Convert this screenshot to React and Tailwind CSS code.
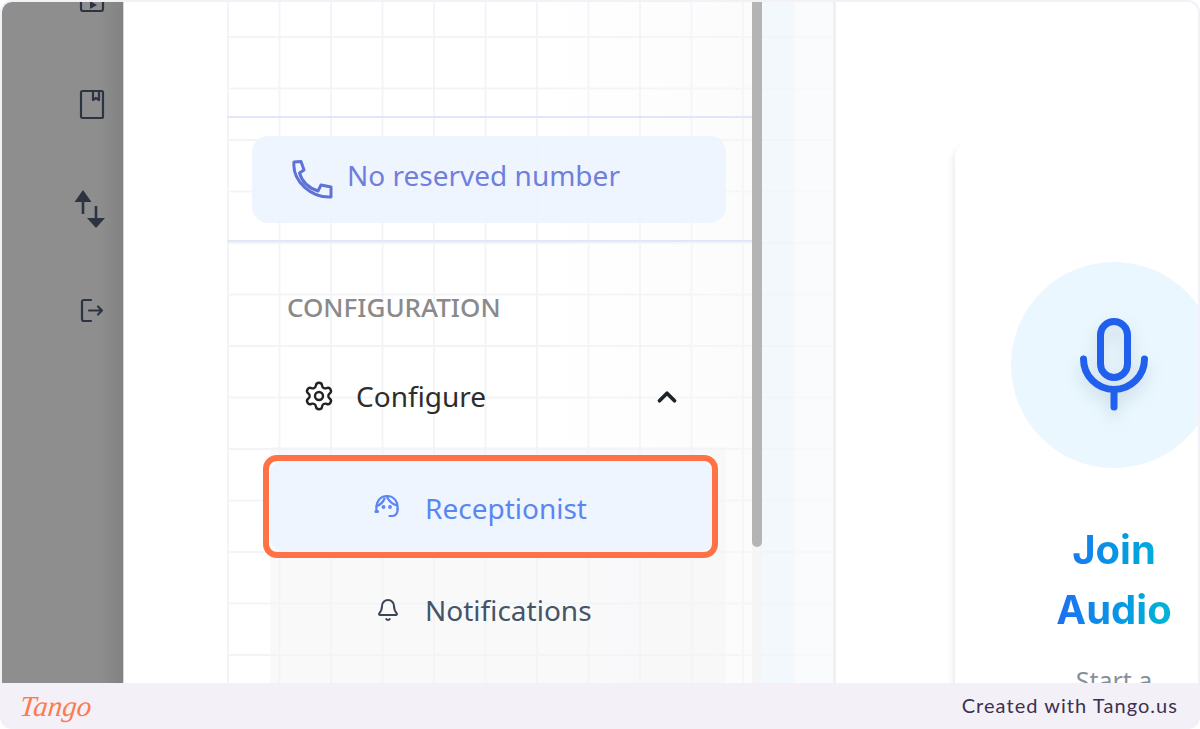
import React from 'react';
import { Settings, ChevronUp, Bell } from 'lucide-react';

const RailIcon = ({ className, children, w, h, vb }) => (
  <svg width={w} height={h} viewBox={vb} fill="none" stroke="#2b3440" strokeWidth="2.2" strokeLinecap="round" strokeLinejoin="round" className={className}>
    {children}
  </svg>
);

const Rail = () => (
  <div className="flex h-full w-[121px] shrink-0 flex-col bg-linear-to-r from-[#8e8e8e] from-80% to-[#828282]">
    <RailIcon w={26} h={30} vb="0 0 26 30" className="ml-[77px] mt-[-20px]">
      <rect x="2" y="2" width="22" height="27" rx="2" />
      <path d="M11 19l7 4-7 4z" fill="#2b3440" stroke="none" />
    </RailIcon>
    <RailIcon w={26} h={31} vb="0 0 26 31" className="ml-[77px] mt-[77px]">
      <rect x="2" y="2" width="22" height="27" rx="1.5" />
      <path d="M14 2v9l3-2 3 2V2" />
    </RailIcon>
    <RailIcon w={32} h={40} vb="0 0 32 40" className="ml-[72px] mt-[69px]">
      <path d="M9 10v15M22 17v15" strokeWidth="2.600" strokeLinecap="butt" />
      <path d="M9 1l8.500 12H.5z M22 39l-9-10h18z" fill="#2b3440" stroke="none" />
    </RailIcon>
    <RailIcon w={24} h={25} vb="0 0 24 25" className="ml-[78px] mt-[69px]">
      <path d="M11 2H4a2 2 0 0 0-2 2v17a2 2 0 0 0 2 2h7" />
      <path d="M9 12.500h13M18 8.500l4 4-4 4" />
    </RailIcon>
  </div>
);

const HeadsetFace = () => (
  <svg width="26" height="24" viewBox="0 0 26 24" fill="none" stroke="#5b86f2" strokeWidth="2.200" strokeLinecap="round" strokeLinejoin="round">
    <path d="M2.500 16C1.500 8 6 2 13 2s11.500 6 10.500 13" />
    <path d="M2.500 12C6 11 9 8.500 10.500 4.500M13 3c2 4 5 7 10 8.500" />
    <path d="M23.500 15c.5 4-2 7-5 7h-3" />
    <path d="M2 17.500h1.500" strokeWidth="3.200" />
    <circle cx="9.500" cy="13" r=".8" fill="#5b86f2" />
    <circle cx="16" cy="13" r=".8" fill="#5b86f2" />
  </svg>
);

const Sidebar = () => (
  <div className="h-full w-[525px] shrink-0 bg-linear-to-r from-white/0 from-60% to-[#f8f8fa]/50 font-['Noto_Sans',sans-serif]">
    <div className="mt-[114px] flex h-[126px] items-center border-y-2 border-[#e2e6fa] px-[25px]">
      <div className="flex h-[87px] w-[474px] items-center rounded-[16px] bg-[#edf4fe]/90 pl-[40px]">
        <svg width="41" height="39" viewBox="0 0 41 39" fill="none" stroke="#5f72d6" strokeWidth="3" strokeLinejoin="round">
          <path d="M2 2l7-.500L12 10 7.500 13C10 22 17 28 26 31l3-6 10 2v10C20 38 0 22 2 2z" />
        </svg>
        <span className="mb-[8px] ml-[14px] text-[28px] leading-none text-[#6f7fdb]">No reserved number</span>
      </div>
    </div>
    <div className="mt-[45px] flex h-[40px] items-center pl-[60px] text-[26px] font-medium text-[#8a8a8a]">CONFIGURATION</div>
    <div className="mt-[39px] flex h-[60px] items-center pl-[76px] pr-[70px]">
      <Settings size={32} strokeWidth={1.8} className="text-[#222]" />
      <span className="ml-[21px] flex-1 text-[28px] leading-none text-[#2d2d2d]">Configure</span>
      <ChevronUp size={30} strokeWidth={3} className="mt-[2px] text-[#1f2328]" />
    </div>
    <div className="ml-[43px] mt-[21px] h-[300px] w-[456px] bg-[#f4f4f5]/50 pt-[14px]">
      <div className="relative flex h-[90px] w-[443px] items-center rounded-[14px] bg-[#eef5fe] pl-[104px]">
        <HeadsetFace />
        <span className="ml-[25px] mt-[3px] text-[28px] leading-none text-[#5b86f2]">Receptionist</span>
        <div className="absolute -bottom-[7px] -left-[7px] -right-[5px] -top-[6px] rounded-[14px] border-[6px] border-[#ff7245]" />
      </div>
      <div className="mt-[14px] flex h-[90px] items-center pl-[106px]">
        <Bell size={24} strokeWidth={2} className="text-[#3a4555]" />
        <span className="ml-[25px] text-[28px] leading-none text-[#465468]">Notifications</span>
      </div>
    </div>
  </div>
);

const GridPanel = () => (
  <div className="flex h-full w-[609px] shrink-0 overflow-hidden border-r-[3px] border-[#f0f0f2] bg-white bg-[linear-gradient(#f3f4f7_1.5px,transparent_1.5px),linear-gradient(90deg,#f3f4f7_1.5px,transparent_1.5px)] bg-[size:51.5px_51.5px] bg-[position:0_-17.5px]">
    <Sidebar />
    <div className="h-full w-[10px] shrink-0 bg-[#f5f5f5]">
      <div className="h-[545px] rounded-b-[5px] bg-[#b4b4b4]" />
    </div>
    <div className="h-full w-[31px] shrink-0 bg-[#eef5fb]/70" />
    <div className="h-full flex-1 bg-[#f8f9fc]/70" />
  </div>
);

const JoinCard = () => (
  <div className="flex-1 overflow-hidden bg-white pl-[119px] pt-[139px]">
    <div className="h-[700px] w-[318px] rounded-tl-[16px] bg-white pt-[121px] shadow-[-3px_4px_5px_rgba(120,120,130,0.12)]">
      <div className="relative mx-auto h-[206px] w-[206px] rounded-full bg-[#eaf7fe]">
        <svg width="76" height="100" viewBox="0 0 76 100" fill="none" stroke="#2060ec" strokeWidth="7" strokeLinecap="round" className="absolute left-[65px] top-[53px] drop-shadow-[0_8px_8px_rgba(60,90,120,0.2)]">
          <rect x="24.500" y="6.500" width="27" height="56" rx="13.500" />
          <path d="M7.500 44a30.500 30.500 0 0 0 61 0M38 75v17" />
        </svg>
      </div>
      <h2 className="mx-auto mt-[52px] w-fit bg-linear-to-r from-[#1f6ef2] to-[#06b6d4] bg-clip-text text-center font-['Inter',sans-serif] text-[40px] font-bold leading-[60px] text-transparent">
        Join<br />Audio
      </h2>
      <p className="mt-[22px] text-center font-['Noto_Sans',sans-serif] text-[25px] leading-[36px] text-[#8a8f98]">Start a</p>
    </div>
  </div>
);

const App = () => (
  <div className="h-[729px] w-[1200px] overflow-hidden bg-white">
    <div className="flex h-full flex-col overflow-hidden rounded-[12px] bg-[#f3f1f7] px-[2px] pt-[2px]">
      <div className="flex h-[681px] overflow-hidden rounded-t-[10px]">
        <Rail />
        <div className="h-full w-[104px] shrink-0 border-l border-[#d8d8d8] bg-white" />
        <GridPanel />
        <JoinCard />
      </div>
      <div className="flex h-[46px] items-center justify-between pl-[18px] pr-[20px]">
        <span className="-skew-x-6 font-['Liberation_Serif',serif] text-[29px] font-normal italic leading-none text-[#ff7a50]">Tango</span>
        <span className="mb-[2px] font-['Lato',sans-serif] text-[20px] tracking-[1.05px] text-[#3d3050]">Created with Tango.us</span>
      </div>
    </div>
  </div>
);

export default App;
